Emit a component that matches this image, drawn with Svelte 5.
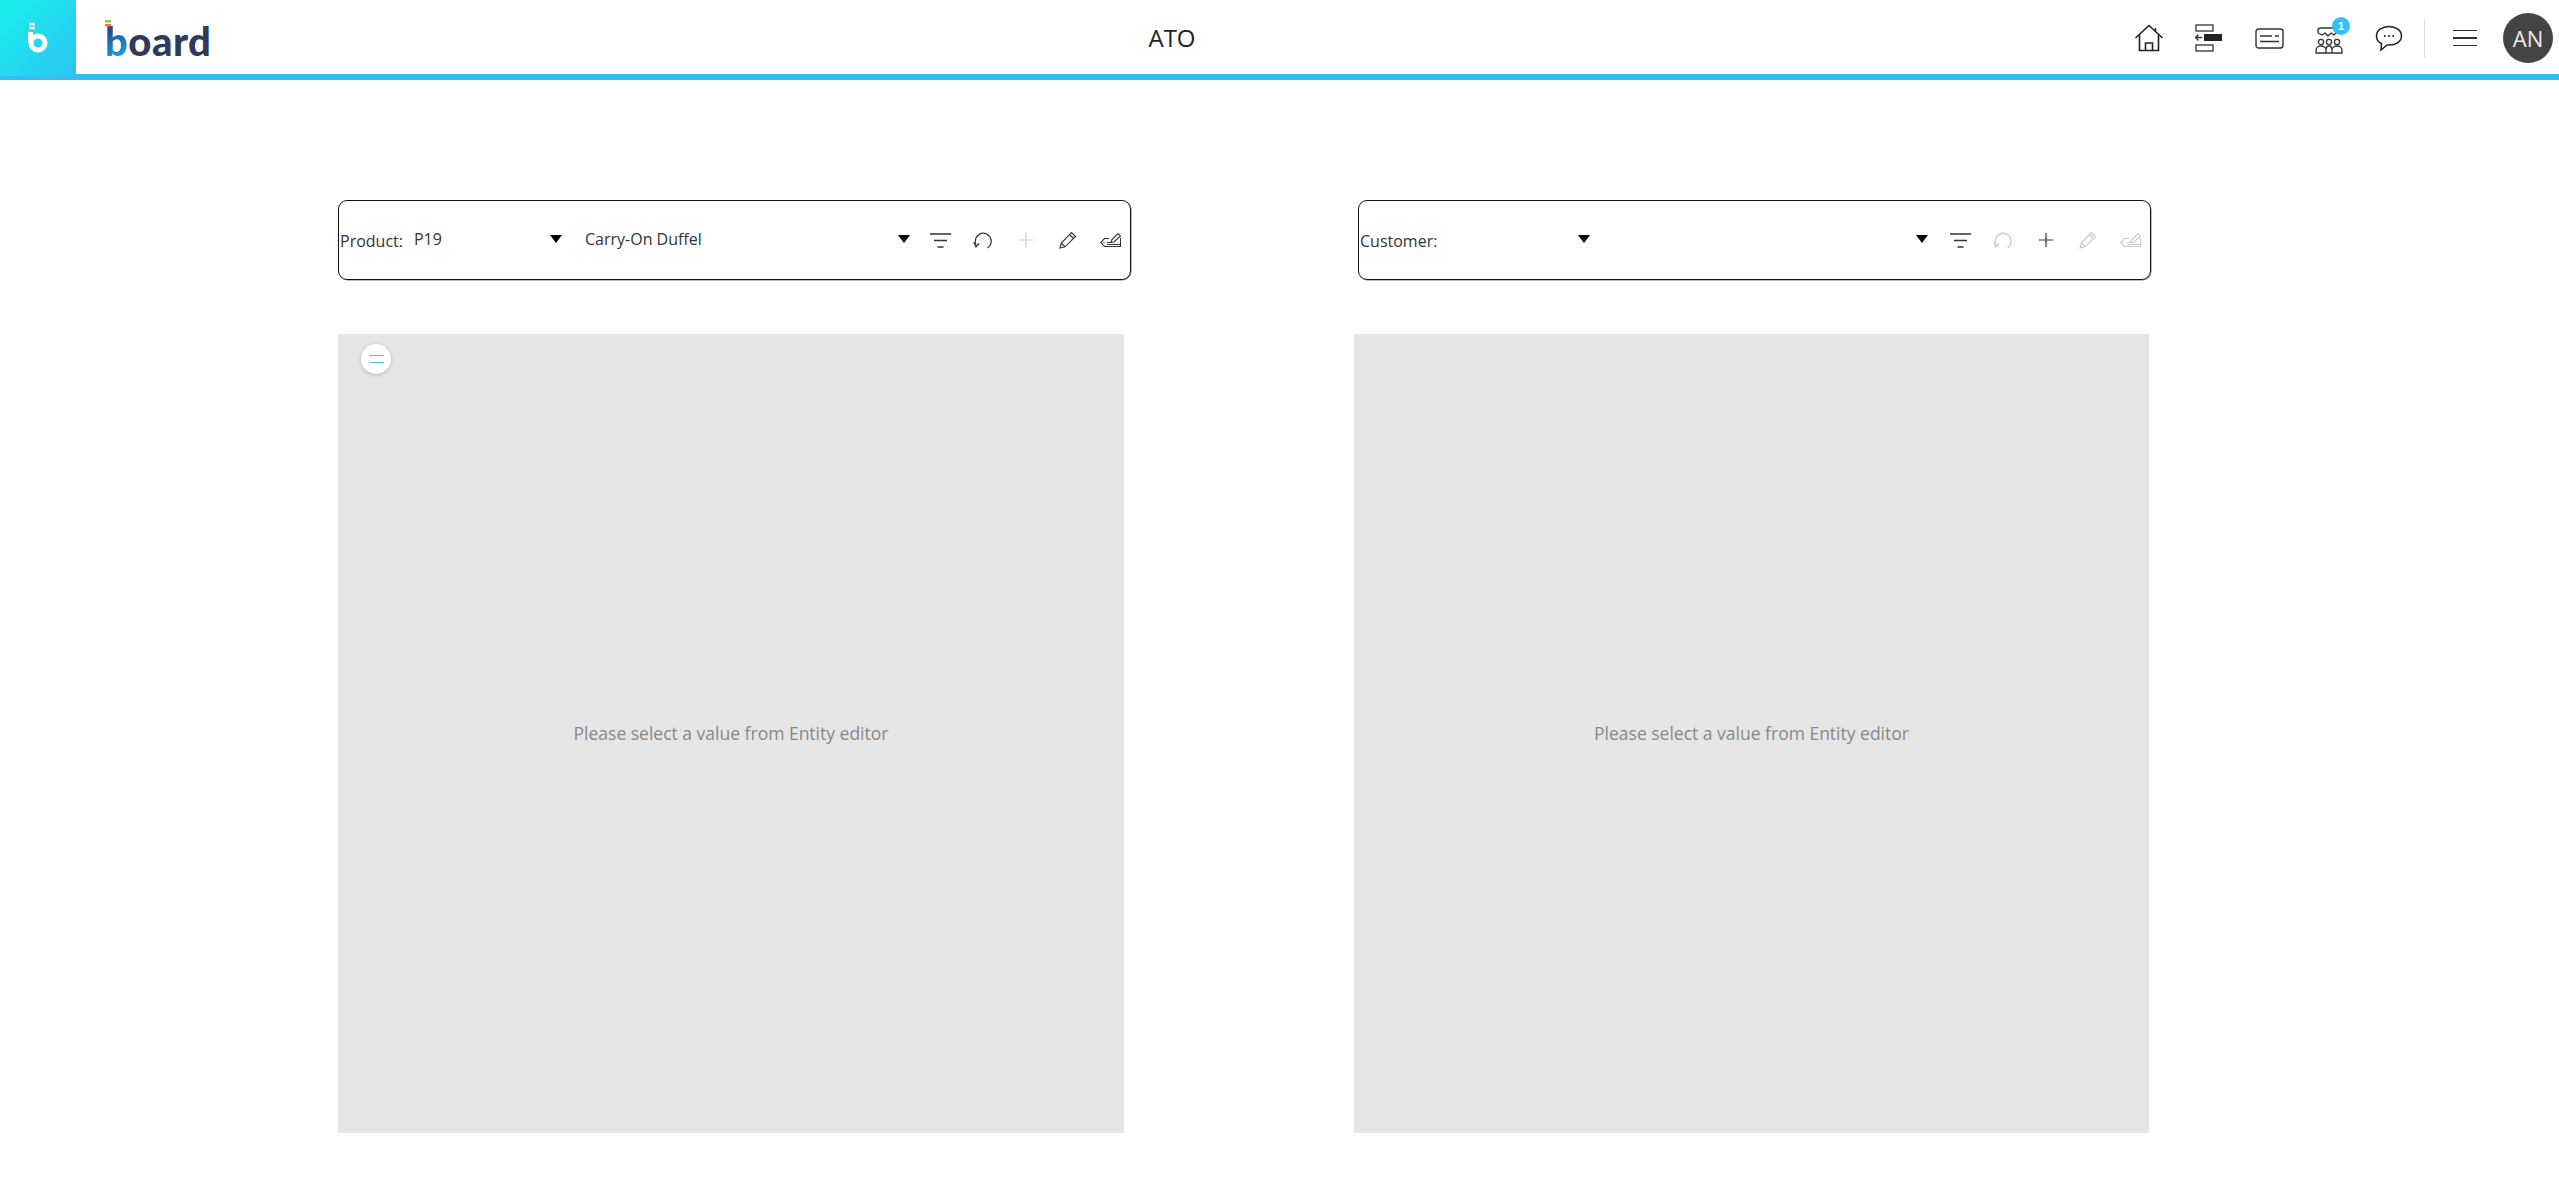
<script>
    // two entity editors, side by side
    const editors = [
        { label: 'Product:', code: 'P19', name: 'Carry-On Duffel', codeWidth: 152, nameWidth: 329, off: { add: true } },
        { label: 'Customer:', code: '', name: '', codeWidth: 146, nameWidth: 319, off: { refresh: true, edit: true, tag: true } }
    ];
</script>

<header class="topbar">
    <div class="brand">
        <a class="brand-tile" href="#home" aria-label="Home">
            <svg width="20" height="32" viewBox="0 0 20 32" fill="none" stroke="#fff">
                <path d="M1 2h6M1 6h6" stroke-width="2.4" />
                <path d="M2.5 10v11" stroke-width="5" />
                <circle cx="10" cy="21" r="7" stroke-width="5" />
            </svg>
        </a>
        <div class="logo">
            <svg class="logo-bars" width="7" height="7" viewBox="0 0 7 7">
                <rect width="6" height="2.5" fill="#8bc45a" />
                <rect y="4" width="6" height="2.5" fill="#ee7a35" />
            </svg>
            <span class="logo-b">b</span>oard
        </div>
    </div>
    <h1>ATO</h1>
    <nav class="actions">
        <button aria-label="Home">
            <svg width="30" height="28" viewBox="0 0 30 28" fill="none" stroke="#222" stroke-width="1.6">
                <path d="M1.5 14 15 1.5 28.500 14M21.500 4v3.500" />
                <path d="M5.500 11v15.500h19V11M11.500 26.500V19h7v7.500" />
            </svg>
        </button>
        <button aria-label="Gantt">
            <svg width="28" height="28" viewBox="0 0 28 28" fill="none" stroke="#333" stroke-width="1.3">
                <rect x="1" y="1" width="17" height="6" />
                <rect x="1" y="21" width="17" height="6" />
                <rect x="9" y="10" width="18" height="7" fill="#222" stroke="none" />
                <path d="M7 13.500H0.500M3.500 10.500l-3 3 3 3" />
            </svg>
        </button>
        <button aria-label="Notes">
            <svg width="29" height="21" viewBox="0 0 29 21" fill="none" stroke="#333" stroke-width="1.4">
                <rect x="1" y="1" width="27" height="19" rx="2.500" />
                <path d="M5 8h12M20 8h4M5 13.500h19" />
            </svg>
        </button>
        <button class="has-badge" aria-label="Collaboration">
            <svg width="28" height="27" viewBox="0 0 28 27" fill="none" stroke="#333" stroke-width="1.3">
                <path d="M6 1h14c3 0 4 4 1 5l-2 2-3-2-3 3-3-3-3 2-2-1c-3-1-3-6 1-6z" />
                <circle cx="6" cy="15" r="2.600" />
                <circle cx="14" cy="15" r="2.600" />
                <circle cx="22" cy="15" r="2.600" />
                <path d="M1 26v-3c0-2 2-4 5-4s5 2 5 4v3zM11 26v-3c0-2 1-4 3-4s3 2 3 4v3M17 26v-3c0-2 2-4 5-4s5 2 5 4v3H1" />
            </svg>
            <span class="badge">1</span>
        </button>
        <button aria-label="Comments">
            <svg width="28" height="27" viewBox="0 0 28 27" fill="none" stroke="#222" stroke-width="1.5">
                <path d="M14 1.500c7 0 12.500 4 12.500 9.500S21 20 14 20h-2l-6 5 .5-6.500C3 17 1.500 14 1.500 11 1.500 5.500 7 1.500 14 1.500z" />
                <path d="M9 11h1.500M13.200 11h1.500M17.400 11h1.500" stroke-width="2" />
            </svg>
        </button>
        <span class="divider"></span>
        <button class="menu" aria-label="Menu"><i></i><i></i><i></i></button>
        <div class="avatar">AN</div>
    </nav>
</header>

<main class="editors">
    {#each editors as ed}
        <section class="col">
            <div class="toolbar">
                <span class="label">{ed.label}</span>
                <div class="select" style="width: {ed.codeWidth}px"><span>{ed.code}</span><b></b></div>
                <div class="select" style="width: {ed.nameWidth}px"><span>{ed.name}</span><b></b></div>
                <div class="tools">
                    <button aria-label="Filter">
                        <svg width="21" height="15" viewBox="0 0 21 15" fill="none" stroke="#333" stroke-width="1.5">
                            <path d="M0 1h21M4 7.500h13M7.500 14h6" />
                        </svg>
                    </button>
                    <button class:off={ed.off.refresh} aria-label="Undo">
                        <svg width="20" height="18" viewBox="0 0 20 18" fill="none" stroke="currentColor" stroke-width="1.300">
                            <path d="M14.500 17A8 8 0 1 0 3 13.500" />
                            <path d="M0.800 11l2.200 4.800 3-3.300" />
                        </svg>
                    </button>
                    <button class:off={ed.off.add} aria-label="Add">
                        <svg width="14" height="14" viewBox="0 0 14 14" stroke="currentColor" stroke-width="1.200">
                            <path d="M0 7h14M7 0v14" />
                        </svg>
                    </button>
                    <button class:off={ed.off.edit} aria-label="Edit">
                        <svg width="18" height="18" viewBox="0 0 18 18" fill="none" stroke="currentColor" stroke-width="1.100">
                            <path d="M1 17l1.300-5L12.500 1.500 16.500 5.500 6 15.800zM2.300 12l3.700 3.800M10.500 3.500l4 4" />
                        </svg>
                    </button>
                    <button class:off={ed.off.tag} aria-label="Edit tag">
                        <svg width="21" height="17" viewBox="0 0 21 17" fill="none" stroke="currentColor" stroke-width="1.100">
                            <path d="M9 6.500H4.500L.7 10.500 4.500 14.500H20.500V6" />
                            <path d="M3.500 10.500h1M7 10.500h4l1-3L18 1.500l2.500 2.500-6.500 6-3 .5M7 12.500h13" />
                        </svg>
                    </button>
                </div>
            </div>
            <div class="panel">
                {#if ed.code}
                    <button class="chip" aria-label="Options"><i></i><i></i></button>
                {/if}
                <p>Please select a value from Entity editor</p>
            </div>
        </section>
    {/each}
</main>

<style>
:global(body) {
    background: #fff;
    font-family: "Open Sans", "Liberation Sans", sans-serif;
    color: #333;
}
button {
    border: none; background: none; padding: 0; margin: 0;
    display: flex; align-items: center; justify-content: center;
}

/* top bar */
.topbar {
    display: grid;
    grid-template-columns: 230px 1884px 1fr;
    height: 74px;
    border-bottom: 6px solid #33bff3;
    align-items: center;
}
.brand { display: flex; align-items: center; height: 100%; }
.brand-tile {
    width: 76px; height: 76px; flex: none;
    align-self: flex-start;
    background: linear-gradient(135deg, #18f0ee, #2cc4f0);
    display: flex; align-items: center; justify-content: center;
    position: relative; z-index: 1;
}
.logo {
    position: relative;
    margin-left: 29px; margin-top: 6px;
    font: 900 40px/1 Lato, "Open Sans", sans-serif;
    color: #2d3b5f;
    letter-spacing: 0.5px;
}
.logo-b {
    background: linear-gradient(160deg, #23438c 20%, #17a6e0 85%);
    -webkit-background-clip: text;
    background-clip: text;
    color: transparent;
}
.logo-bars { position: absolute; left: 0; top: -1px; }
h1 {
    margin: 0; text-align: center;
    font-size: 24px; font-weight: 400; color: #222;
    line-height: 74px;
}
.actions {
    display: flex; align-items: center; justify-content: flex-end;
    padding-right: 6px;
    height: 74px;
}
.actions > button { width: 60px; height: 74px; position: relative; }
.has-badge svg { margin-top: 5px; }
.badge {
    position: absolute; left: 33px; top: 16px;
    width: 18px; height: 18px; border-radius: 50%;
    background: #33bff3; color: #fff;
    font-size: 11px; font-weight: 700; line-height: 18px; text-align: center;
}
.divider { width: 1px; height: 39px; background: #ddd; margin: 0 5px; }
.actions > .menu {
    flex-direction: column; gap: 6px;
    width: 70px;
}
.menu i { display: block; width: 24px; height: 1.500px; background: #333; }
.avatar {
    width: 50px; height: 50px; border-radius: 50%;
    background: #444; color: #ececec;
    margin-left: 3px;
    font-size: 22px; line-height: 50px; text-align: center;
}

/* editors */
.editors {
    display: grid;
    grid-template-columns: 786px 795px;
    column-gap: 230px;
    padding: 120px 0 0 338px;
}
.col { display: flex; flex-direction: column; gap: 54px; }
.toolbar {
    display: flex; align-items: center;
    width: 793px; height: 80px;
    box-sizing: border-box;
    border: 1.500px solid #111;
    border-radius: 9px;
    box-shadow: 0.5px 0.5px 0 #777;
    flex: none;
}
.col + .col .toolbar { margin-left: 4px; }
.label { font-size: 16px; margin: 2px 11px 0 1px; white-space: nowrap; }
.select {
    display: flex; align-items: center; justify-content: space-between;
    flex: none; box-sizing: border-box;
    padding: 0 4px 2px 0;
    margin-right: 19px;
    font-size: 16px;
    height: 24px;
}
.select + .select { margin-right: 0; }
.select b {
    width: 0; height: 0;
    border-left: 6px solid transparent;
    border-right: 6px solid transparent;
    border-top: 8px solid #000;
}
.tools { display: flex; margin-left: auto; margin-right: -1.500px; }
.tools button { width: 42.400px; height: 30px; color: #333; }
.tools .off { color: #c8c8c8; }

.panel {
    height: 799px;
    background: #e6e6e6;
    position: relative;
    display: flex; align-items: center; justify-content: center;
}
.panel p { margin: 0 0 2px; font-size: 17.500px; color: #888; }
.chip {
    position: absolute; left: 23px; top: 10px;
    width: 30px; height: 30px; border-radius: 50%;
    background: #fff;
    box-shadow: 0 1px 4px rgba(0,0,0,.2);
    flex-direction: column; gap: 6px;
}
.chip i { display: block; width: 15px; height: 1px; background: #3ccdf5; }
</style>
